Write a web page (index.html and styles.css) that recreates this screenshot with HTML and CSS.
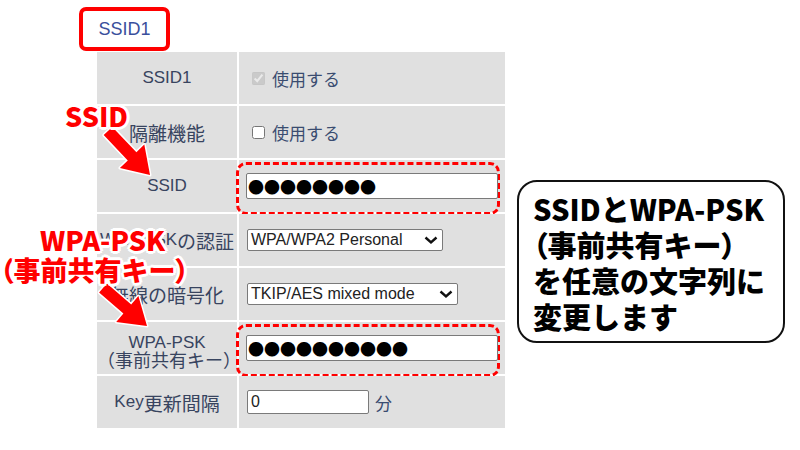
FILE: index.html
```html
<!DOCTYPE html>
<html lang="ja">
<head>
  <meta charset="UTF-8">
  <title>SSID1 設定</title>
  <link rel="stylesheet" href="styles.css">
</head>
<body>
  <div class="page">
    <div class="tab">SSID1</div>

    <div class="settings">
      <div class="label"><span class="en">SSID1</span></div>
      <div class="value">
        <label class="check"><input type="checkbox" checked disabled>使用する</label>
      </div>

      <div class="label">隔離機能</div>
      <div class="value">
        <label class="check"><input type="checkbox">使用する</label>
      </div>

      <div class="label"><span class="en">SSID</span></div>
      <div class="value">
        <div class="mark">
          <input class="field secret" type="text" value="●●●●●●●●" readonly>
        </div>
      </div>

      <div class="label"><span class="en">WPA-PSK</span>の認証</div>
      <div class="value">
        <div class="select sel-auth">WPA/WPA2 Personal
          <svg width="14" height="10" viewBox="0 0 14 10"><path d="M1.5 2.5 L7 7.5 L12.5 2.5" fill="none" stroke="#111" stroke-width="2.4"/></svg>
        </div>
      </div>

      <div class="label">無線の暗号化</div>
      <div class="value">
        <div class="select sel-enc">TKIP/AES mixed mode
          <svg width="14" height="10" viewBox="0 0 14 10"><path d="M1.5 2.5 L7 7.5 L12.5 2.5" fill="none" stroke="#111" stroke-width="2.4"/></svg>
        </div>
      </div>

      <div class="label two-line"><span class="en">WPA-PSK</span><br>（事前共有キー）</div>
      <div class="value">
        <div class="mark">
          <input class="field secret" type="text" value="●●●●●●●●●●" readonly>
        </div>
      </div>

      <div class="label"><span class="en">Key</span>更新間隔</div>
      <div class="value">
        <input class="field short" type="text" value="0" readonly>
        <span class="unit">分</span>
      </div>
    </div>

    <!-- annotations -->
    <svg class="arrows" width="800" height="450" viewBox="0 0 800 450">
      <polygon points="103.7,135.1 127.8,160.4 119.9,168 150,175 144.3,144.6 136.4,152.2 112.3,126.9"
               fill="#ff0000" stroke="#fff" stroke-width="3" stroke-linejoin="round" paint-order="stroke"/>
      <polygon points="99.1,292.5 123.4,313.5 116.2,321.9 147,326 138.4,296.1 131.2,304.5 106.9,283.5"
               fill="#ff0000" stroke="#fff" stroke-width="3" stroke-linejoin="round" paint-order="stroke"/>
    </svg>

    <div class="note note-ssid">SSID</div>
    <div class="note note-psk">
      <div class="note-first">WPA-PSK</div>
      <div><span class="paren">（</span>事前共有キー<span class="paren">）</span></div>
    </div>

    <div class="callout">
      SSIDとWPA-PSK<br>
      <span class="paren">（</span>事前共有キー<span class="paren">）</span><br>
      を任意の文字列に<br>
      変更します
    </div>
  </div>
</body>
</html>
```

FILE: styles.css
```css
body {
  margin: 0;
  background: #ffffff;
  font-family: "Liberation Sans", "Noto Sans CJK JP", sans-serif;
}
.page {
  position: relative;
  width: 800px;
  height: 450px;
  overflow: hidden;
}
.tab {
  box-sizing: border-box;
  width: 91px;
  height: 44px;
  margin: 7px 0 1px 79px;
  border: 4px solid #ff0000;
  border-radius: 7px;
  display: flex;
  align-items: center;
  justify-content: center;
  font-size: 18px;
  color: #3a4f9c;
}
.settings {
  display: grid;
  grid-template-columns: 140px 266px;
  grid-auto-rows: 52px;
  gap: 2px;
  margin-left: 97px;
  width: 408px;
}
.label {
  background: #e0e0e0;
  color: #38445f;
  font-size: 19px;
  display: flex;
  flex-wrap: wrap;
  align-items: center;
  align-content: center;
  justify-content: center;
  text-align: center;
  white-space: nowrap;
}
.label .en {
  font-size: 17px;
}
.two-line {
  display: block;
  font-size: 18px;
  line-height: 19px;
  padding-top: 8px;
}
.value {
  background: #e0e0e0;
  display: flex;
  align-items: center;
  padding-left: 8px;
  color: #3a4c70;
  font-size: 17px;
}
.check {
  display: flex;
  align-items: center;
}
.check input {
  margin: 0 7px 0 5px;
  width: 13px;
  height: 13px;
}
.mark {
  box-sizing: border-box;
  width: 264px;
  height: 53px;
  margin: 5px 0 0 -11px;
  padding: 8px 0 0 7px;
  border: 3px dashed #ff0000;
  border-radius: 10px;
}
.field {
  box-sizing: border-box;
  border: 1px solid #7a7a7a;
  border-radius: 2px;
  background: #fff;
  outline: none;
}
.secret {
  width: 252px;
  height: 26px;
  padding: 0 1px;
  font-family: "Noto Sans CJK JP", sans-serif;
  font-size: 16px;
  color: #000;
}
.short {
  width: 122px;
  height: 24px;
  padding: 0 3px;
  font-family: "Liberation Sans", sans-serif;
  font-size: 16px;
  color: #222;
}
.unit {
  margin-left: 6px;
}
.select {
  box-sizing: border-box;
  height: 22px;
  display: flex;
  align-items: center;
  justify-content: space-between;
  padding: 0 4px 0 3px;
  border: 1px solid #7a7a7a;
  border-radius: 2px;
  background: #fff;
  color: #222;
  font-size: 16px;
  white-space: nowrap;
}
.sel-auth { width: 196px; }
.sel-enc { width: 211px; }

.arrows {
  position: absolute;
  left: 0;
  top: 0;
  pointer-events: none;
}
.note {
  position: absolute;
  color: #ff0000;
  font-family: "Noto Sans CJK JP", sans-serif;
  font-weight: 900;
  font-size: 27px;
  line-height: 30px;
  white-space: nowrap;
  text-shadow:
    2px 0 #fff, -2px 0 #fff, 0 2px #fff, 0 -2px #fff,
    2px 2px #fff, -2px -2px #fff, 2px -2px #fff, -2px 2px #fff,
    3px 0 #fff, -3px 0 #fff, 0 3px #fff, 0 -3px #fff;
}
.note-ssid {
  left: 65px;
  top: 101px;
}
.note-psk {
  left: 0;
  top: 225px;
}
.note-first {
  padding-left: 40px;
}
.paren {
  font-feature-settings: "palt";
}
.callout {
  position: absolute;
  left: 517px;
  top: 180px;
  box-sizing: border-box;
  width: 268px;
  height: 163px;
  padding: 8px 0 0 14px;
  border: 2px solid #111;
  border-radius: 20px;
  background: #fff;
  color: #000;
  font-family: "Noto Sans CJK JP", sans-serif;
  font-weight: 900;
  font-size: 29px;
  line-height: 36px;
  white-space: nowrap;
}
```
